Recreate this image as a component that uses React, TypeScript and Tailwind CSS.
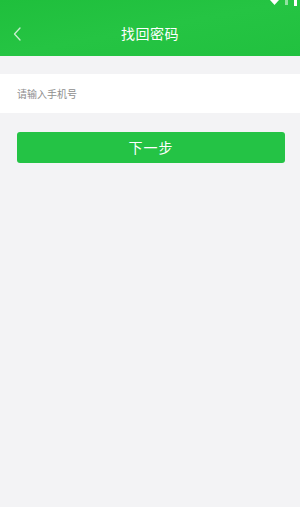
import React from "react";

const font = {
	fontFamily: '"Noto Sans CJK SC", "Noto Sans", sans-serif',
};

const App = () => {
	return (
		<div
			className="w-[300px] h-[507px] bg-[#f3f3f5] flex flex-col"
			style={font}
		>
			<header className="relative h-[56px] bg-gradient-to-br from-[#1fbf3c] via-[#25c443] to-[#21c13f] flex items-center justify-center shrink-0">
				<div className="absolute top-0 right-[3px] flex items-start gap-[6px]">
					<svg width="9" height="5" viewBox="0 0 9 5">
						<path d="M0 0 L9 0 L4.5 5 Z" fill="#ffffff" />
					</svg>
					<div className="w-[3px] h-[5px] bg-white/50" />
					<div className="w-[3px] h-[6px] bg-white" />
				</div>
				<button className="absolute left-[10px] top-[25px] w-[14px] h-[18px] flex items-center justify-center">
					<svg width="8" height="14" viewBox="0 0 8 14" fill="none">
						<path
							d="M7 1 L1.5 7 L7 13"
							stroke="#c9efd0"
							strokeWidth="1.3"
							strokeLinecap="round"
							strokeLinejoin="round"
						/>
					</svg>
				</button>
				<h1 className="mt-[10px] text-white text-[14px] leading-none tracking-[0.5px]">
					找回密码
				</h1>
			</header>

			<div className="mt-[18px] h-[39px] bg-white flex items-center px-[17px]">
				<input
					className="w-full bg-transparent outline-none text-[10px] text-[#333] placeholder:text-[#8e8e8e]"
					placeholder="请输入手机号"
					style={font}
				/>
			</div>

			<div className="pl-[17px] pr-[15px] mt-[19px]">
				<button className="w-full h-[31px] rounded-[3px] bg-[#24c345] text-white text-[14px] flex items-center justify-center tracking-[1px]">
					下一步
				</button>
			</div>
		</div>
	);
};

export default App;
